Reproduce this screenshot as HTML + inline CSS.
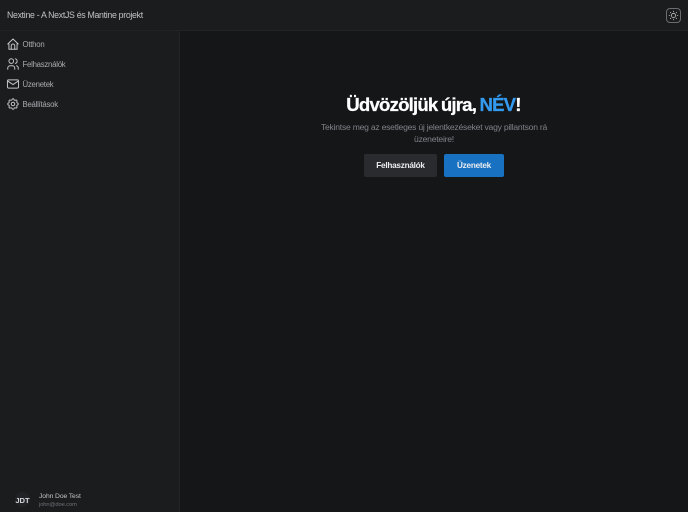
<!DOCTYPE html>
<html lang="hu">
<head>
<meta charset="utf-8">
<title>Nextine</title>
<style>
*{box-sizing:border-box}
html,body{margin:0;padding:0;width:688px;height:512px;overflow:hidden;background:#151618;font-family:"Liberation Sans",sans-serif}
.abs{position:absolute;white-space:nowrap}
#header{position:absolute;left:0;top:0;width:688px;height:31px;background:#1b1c1e;border-bottom:1px solid #222326}
#side{position:absolute;left:0;top:31px;width:180px;height:481px;background:#1b1c1e;border-right:1px solid #222326}
.nav{font-size:7.8px;letter-spacing:-.25px;color:#a9aaae;left:22.5px;line-height:12px}
svg{position:absolute;fill:none;stroke:#c4c5c8;stroke-width:1.7;stroke-linecap:round;stroke-linejoin:round}
.btn{position:absolute;top:154px;height:23px;border-radius:2px;font-size:8.2px;font-weight:bold;letter-spacing:-.25px;line-height:23px;text-align:center;color:#e9ecef}
</style>
</head>
<body>
<div id="header"></div>
<div id="side"></div>
<div class="abs" style="left:7px;top:9px;font-size:8.8px;letter-spacing:-.32px;line-height:13px;color:#c1c2c5">Nextine - A NextJS és Mantine projekt</div>
<div style="position:absolute;left:666px;top:8px;width:15px;height:15px;border:1px solid #6a6c71;border-radius:4px;background:#1b1c1e"></div>
<svg style="left:668px;top:10px" width="11" height="11" viewBox="0 0 24 24" stroke="#d5d6d9" stroke-width="2.6"><circle cx="12" cy="12" r="4.5"/><path d="M2.5 12h1.5M20 12h1.5M12 2.5V4M12 20v1.5M5.3 5.3l1 1M17.7 17.7l1 1M5.3 18.7l1-1M17.7 6.3l1-1"/></svg>

<svg style="left:6px;top:37px" width="14" height="14" viewBox="0 0 24 24"><path d="M3 12L12 3.5l9 8.5M5 10v11h14V10M9 21v-6a3 3 0 0 1 6 0v6"/></svg>
<div class="abs nav" style="top:38.5px">Otthon</div>
<svg style="left:6px;top:57px" width="14" height="14" viewBox="0 0 24 24"><circle cx="9" cy="7" r="4"/><path d="M3 21v-2a4 4 0 0 1 4-4h4a4 4 0 0 1 4 4v2M16 3.1a4 4 0 0 1 0 7.8M21 21v-2a4 4 0 0 0-3-3.9"/></svg>
<div class="abs nav" style="top:58.5px">Felhasználók</div>
<svg style="left:6px;top:77px" width="14" height="14" viewBox="0 0 24 24"><rect x="2.5" y="5" width="19" height="14" rx="2"/><path d="M3 7l9 6 9-6"/></svg>
<div class="abs nav" style="top:78.5px">Üzenetek</div>
<svg style="left:6px;top:97px" width="14" height="14" viewBox="0 0 24 24"><path d="M10.3 4.3c.4-1.8 3-1.8 3.4 0a1.7 1.7 0 0 0 2.6 1.1c1.5-.9 3.3.8 2.4 2.4a1.7 1.7 0 0 0 1 2.5c1.8.4 1.8 3 0 3.4a1.7 1.7 0 0 0-1 2.6c.9 1.5-.9 3.3-2.4 2.4a1.7 1.7 0 0 0-2.6 1c-.4 1.8-3 1.8-3.4 0a1.7 1.7 0 0 0-2.6-1c-1.5.9-3.3-.9-2.4-2.4a1.7 1.7 0 0 0-1-2.6c-1.8-.4-1.8-3 0-3.4a1.7 1.7 0 0 0 1-2.5c-.9-1.6.9-3.3 2.4-2.4 1 .6 2.3.1 2.6-1.1z"/><circle cx="12" cy="12" r="3"/></svg>
<div class="abs nav" style="top:98.5px">Beállítások</div>

<div style="position:absolute;left:15px;top:492px;width:15px;height:15px;border-radius:50%;background:#222326"></div>
<div class="abs" style="left:7.5px;width:30px;text-align:center;top:494.5px;font-size:7.6px;font-weight:bold;line-height:11px;color:#d5d6d9">JDT</div>
<div class="abs" style="left:39px;top:490.5px;font-size:6.8px;letter-spacing:-.12px;line-height:11px;color:#c1c2c5">John Doe Test</div>
<div class="abs" style="left:39px;top:499.5px;font-size:5.8px;letter-spacing:-.1px;line-height:11px;color:#6d7076">john@doe.com</div>

<div class="abs" style="left:179.5px;width:508px;text-align:center;top:92px;font-size:18.6px;font-weight:bold;line-height:25px;letter-spacing:-.8px;word-spacing:-1px;color:#fff;-webkit-text-stroke:.25px currentColor">Üdvözöljük újra, <span style="color:#339af0">NÉV</span>!</div>
<div class="abs" style="left:180px;width:508px;text-align:center;top:120.5px;font-size:8.6px;letter-spacing:-.24px;line-height:13px;color:#7f8288">Tekintse meg az esetleges új jelentkezéseket vagy pillantson rá</div>
<div class="abs" style="left:180px;width:508px;text-align:center;top:132.5px;font-size:8.6px;letter-spacing:-.24px;line-height:13px;color:#7f8288">üzeneteire!</div>
<div class="btn" style="left:364px;width:73px;background:#2a2b2f">Felhasználók</div>
<div class="btn" style="left:444px;width:60px;background:#1971c2">Üzenetek</div>
</body>
</html>
